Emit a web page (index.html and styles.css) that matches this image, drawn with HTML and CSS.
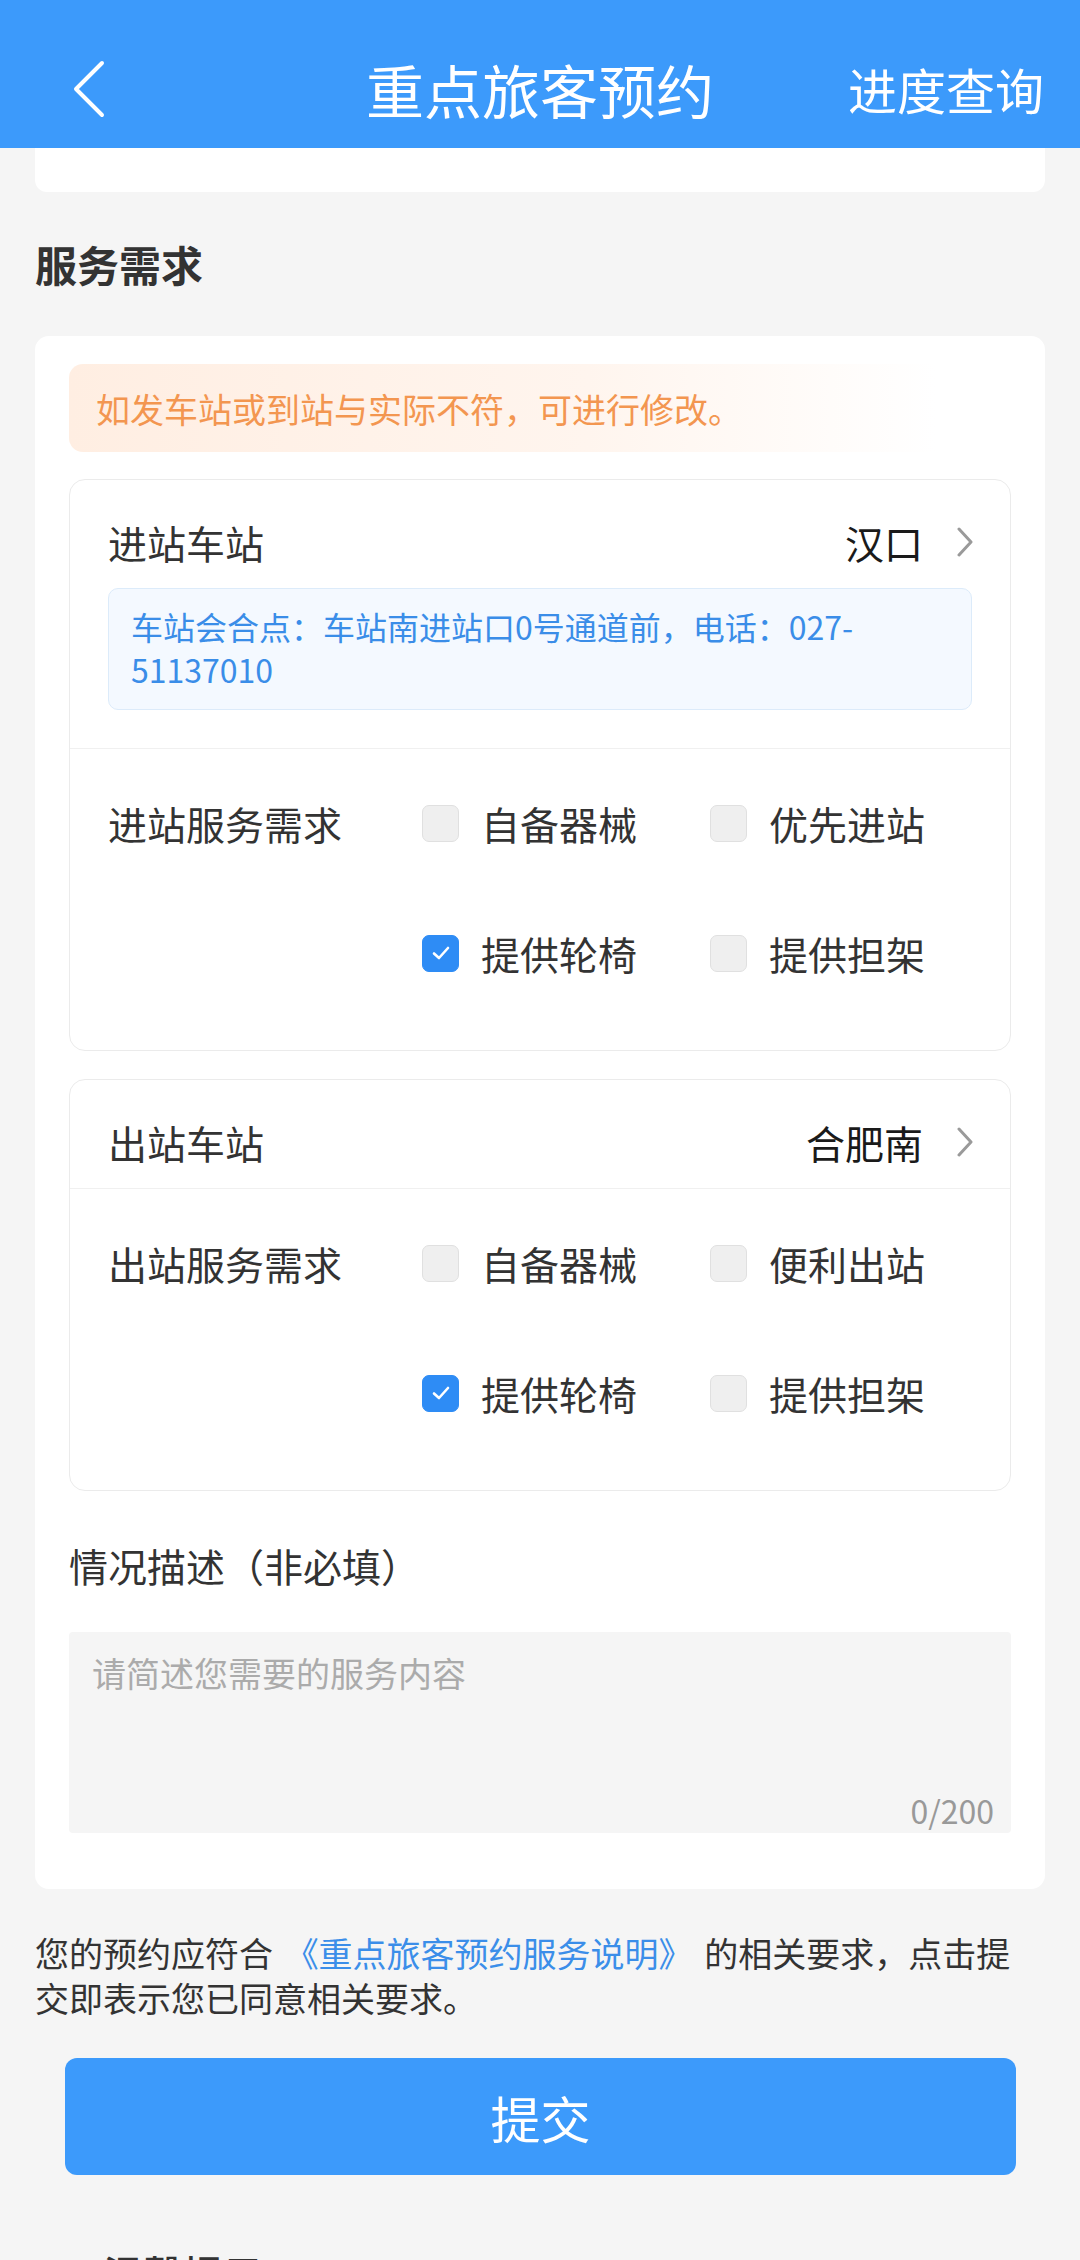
FILE: index.html
```html
<!DOCTYPE html>
<html lang="zh-CN">
<head>
  <meta charset="UTF-8">
  <meta name="viewport" content="width=device-width, initial-scale=1.0">
  <title>重点旅客预约</title>
  <link rel="stylesheet" href="styles.css">
</head>
<body>

  <!-- Top bar -->
  <header class="nav-bar">
    <div class="nav-left">
      <svg class="back-icon" width="40" height="60" viewBox="0 0 40 60">
        <polyline points="32,4 6,30 32,56" fill="none" stroke="#fff" stroke-width="4" stroke-linecap="round" stroke-linejoin="round"/>
      </svg>
    </div>
    <div class="nav-title">重点旅客预约</div>
    <div class="nav-right">进度查询</div>
  </header>

  <!-- Tail of the card above (scrolled) -->
  <div class="card-tail"></div>

  <h2 class="section-title">服务需求</h2>

  <section class="main-card">
    <div class="notice">如发车站或到站与实际不符，可进行修改。</div>

    <!-- Entry station -->
    <div class="station-card">
      <div class="station-row">
        <span class="station-label">进站车站</span>
        <span class="station-value">汉口
          <svg class="arrow" width="18" height="30" viewBox="0 0 18 30">
            <polyline points="3,2 15,15 3,28" fill="none" stroke="#9a9a9a" stroke-width="3" stroke-linecap="round" stroke-linejoin="round"/>
          </svg>
        </span>
      </div>
      <div class="meet-info">车站会合点：车站南进站口0号通道前，电话：027-51137010</div>
      <div class="service">
        <span class="service-label">进站服务需求</span>
        <label class="option"><span class="box"></span>自备器械</label>
        <label class="option"><span class="box"></span>优先进站</label>
        <label class="option second-row"><span class="box checked"><svg width="24" height="24" viewBox="0 0 24 24"><polyline points="5,12.5 10,17 19,7" fill="none" stroke="#fff" stroke-width="2.6" stroke-linecap="round" stroke-linejoin="round"/></svg></span>提供轮椅</label>
        <label class="option"><span class="box"></span>提供担架</label>
      </div>
    </div>

    <!-- Exit station -->
    <div class="station-card">
      <div class="station-row">
        <span class="station-label">出站车站</span>
        <span class="station-value">合肥南
          <svg class="arrow" width="18" height="30" viewBox="0 0 18 30">
            <polyline points="3,2 15,15 3,28" fill="none" stroke="#9a9a9a" stroke-width="3" stroke-linecap="round" stroke-linejoin="round"/>
          </svg>
        </span>
      </div>
      <div class="service">
        <span class="service-label">出站服务需求</span>
        <label class="option"><span class="box"></span>自备器械</label>
        <label class="option"><span class="box"></span>便利出站</label>
        <label class="option second-row"><span class="box checked"><svg width="24" height="24" viewBox="0 0 24 24"><polyline points="5,12.5 10,17 19,7" fill="none" stroke="#fff" stroke-width="2.6" stroke-linecap="round" stroke-linejoin="round"/></svg></span>提供轮椅</label>
        <label class="option"><span class="box"></span>提供担架</label>
      </div>
    </div>

    <div class="desc-title">情况描述（非必填）</div>
    <div class="desc-box">
      <div class="placeholder">请简述您需要的服务内容</div>
      <div class="counter">0/200</div>
    </div>
  </section>

  <p class="agreement">您的预约应符合 <a class="link" href="#">《重点旅客预约服务说明》</a> 的相关要求，点击提交即表示您已同意相关要求。</p>

  <button class="submit-btn">提交</button>

  <div class="tips-title">温馨提示</div>

</body>
</html>
```

FILE: styles.css
```css
* {
  margin: 0;
  padding: 0;
  box-sizing: border-box;
}

body {
  font-family: "Noto Sans CJK SC", "Noto Sans", sans-serif;
  background: #f5f5f5;
  color: #333;
}

/* Top bar */
.nav-bar {
  height: 148px;
  padding-top: 30px;
  background: #3c9afb;
  color: #fff;
  display: grid;
  grid-template-columns: 1fr auto 1fr;
  align-items: center;
}

.nav-left {
  padding-left: 70px;
  display: flex;
  align-items: center;
}

.back-icon {
  display: block;
}

.nav-title {
  font-size: 58px;
  line-height: 70px;
}

.nav-right {
  font-size: 49px;
  line-height: 60px;
  text-align: right;
  padding-right: 36px;
}

.card-tail {
  height: 44px;
  margin: 0 35px;
  background: #fff;
  border-radius: 0 0 12px 12px;
}

.section-title {
  font-size: 42px;
  font-weight: 700;
  line-height: 60px;
  color: #333;
  margin: 42px 35px 42px;
}

/* Main card */
.main-card {
  margin: 0 35px;
  background: #fff;
  border-radius: 14px;
  padding: 28px 34px 56px;
}

.notice {
  height: 88px;
  display: flex;
  align-items: center;
  padding-left: 27px;
  border-radius: 14px;
  background: linear-gradient(90deg, #ffeee2 0%, #fff5ee 55%, #ffffff 92%);
  color: #f39650;
  font-size: 34px;
}

.station-card {
  margin-top: 27px;
  border: 1.5px solid #ebebeb;
  border-radius: 16px;
}

.station-card + .station-card {
  margin-top: 28px;
}

.station-row {
  display: flex;
  justify-content: space-between;
  align-items: center;
  padding: 40px 36px 24px 38px;
  font-size: 39px;
  line-height: 44px;
}

.station-label {
  color: #333;
}

.station-value {
  display: flex;
  align-items: center;
  color: #1a1a1a;
}

.arrow {
  margin-left: 33px;
}

.meet-info {
  margin: 0 38px 38px;
  padding: 16px 20px 18px 22px;
  background: #f4f9ff;
  border: 1px solid #dcebfa;
  border-radius: 10px;
  color: #3a8de8;
  font-size: 32px;
  line-height: 43px;
}

.service {
  border-top: 1.5px solid #f0f0f0;
  padding: 52px 38px 75px;
  display: grid;
  grid-template-columns: 314px 288px 1fr;
  row-gap: 86px;
  font-size: 39px;
  line-height: 44px;
}

.service-label {
  color: #333;
}

.option {
  display: flex;
  align-items: center;
  color: #333;
}

.option.second-row {
  grid-column: 2;
}

.box {
  width: 37px;
  height: 37px;
  margin-right: 22px;
  border-radius: 7px;
  background: #efefef;
  border: 1px solid #e0e0e0;
  display: flex;
  align-items: center;
  justify-content: center;
}

.box.checked {
  background: #2e8cf5;
  border-color: #2e8cf5;
}

.desc-title {
  margin-top: 52px;
  font-size: 39px;
  line-height: 44px;
  color: #333;
}

.desc-box {
  margin-top: 45px;
  height: 201px;
  background: #f5f5f5;
  border-radius: 4px;
  padding: 19px 17px 5px 23px;
  display: flex;
  flex-direction: column;
  justify-content: space-between;
}

.placeholder {
  font-size: 34px;
  line-height: 44px;
  color: #ababab;
}

.counter {
  text-align: right;
  font-size: 32px;
  line-height: 36px;
  color: #999;
}

/* Bottom */
.agreement {
  margin: 41px 50px 0 35px;
  font-size: 34px;
  line-height: 45px;
  color: #333;
}

.link {
  color: #3b8ee9;
  text-decoration: none;
  padding: 0 4px;
}

.submit-btn {
  display: block;
  width: 951px;
  height: 117px;
  margin: 38px 0 0 65px;
  border: none;
  border-radius: 12px;
  background: #3c9afb;
  color: #fff;
  font-family: inherit;
  font-size: 50px;
}

.tips-title {
  margin: 70px 0 0 103px;
  font-size: 40px;
  line-height: 56px;
  font-weight: 500;
  color: #333;
}
```
